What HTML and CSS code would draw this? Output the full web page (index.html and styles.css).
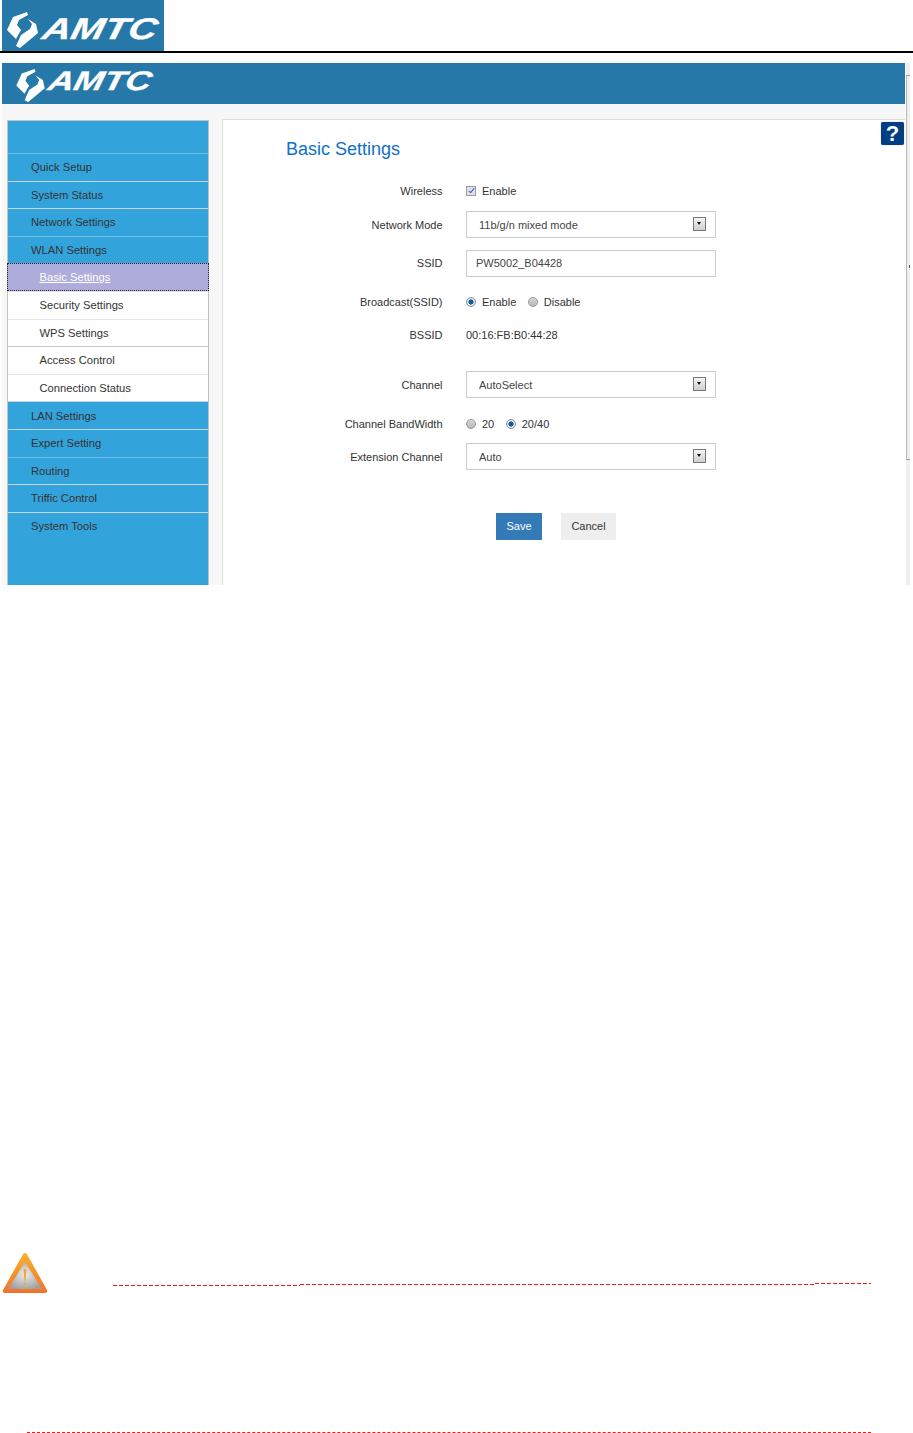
FILE: index.html
```html
<!DOCTYPE html>
<html>
  <head>
    <title>Basic Settings</title>
    <link rel="stylesheet" href="styles.css">
  </head>
  <body>
    <svg class="defs" width="0" height="0">
      <symbol id="logoMark" viewBox="0 0 31 36">
        <path d="M0 18 L6 5 L20 0 L21 3 L12 8 L10 13 L14 18 L9 27 Z" fill="#fff"/>
        <path d="M21 7 L29 12 L31 21 L13 36 L9 34 L14 23 L23 17 L25 12 Z" fill="#fff"/>
      </symbol>
    </svg>

    <header class="doc-header">
      <div class="logo-box">
        <svg class="logo-mark"><use href="#logoMark"/></svg>
        <span class="logo-text">AMTC</span>
      </div>
    </header>

    <section class="shot">
      <div class="shot-main">
        <div class="banner">
          <svg class="banner-mark"><use href="#logoMark"/></svg>
          <span class="banner-text">AMTC</span>
        </div>

        <div class="shot-body">
          <nav class="sidebar">
            <div class="side-top"></div>
            <a class="menu-item soft">Quick Setup</a>
            <a class="menu-item">System Status</a>
            <a class="menu-item">Network Settings</a>
            <a class="menu-item soft">WLAN Settings</a>
            <a class="sub-item active">Basic Settings</a>
            <a class="sub-item">Security Settings</a>
            <a class="sub-item">WPS Settings</a>
            <a class="sub-item dark">Access Control</a>
            <a class="sub-item">Connection Status</a>
            <a class="menu-item">LAN Settings</a>
            <a class="menu-item">Expert Setting</a>
            <a class="menu-item soft">Routing</a>
            <a class="menu-item">Triffic Control</a>
            <a class="menu-item">System Tools</a>
          </nav>

          <main class="panel">
            <a class="help">?</a>
            <h1 class="title">Basic Settings</h1>

            <form class="form">
              <div class="row up">
                <label class="row-label">Wireless</label>
                <div class="row-value">
                  <label class="opt"><input type="checkbox" checked>Enable</label>
                </div>
              </div>
              <div class="row">
                <label class="row-label">Network Mode</label>
                <div class="select-wrap">
                  <select class="select"><option>11b/g/n mixed mode</option></select>
                  <span class="select-btn"></span>
                </div>
              </div>
              <div class="row row-mid up">
                <label class="row-label">SSID</label>
                <input class="text-input" type="text" value="PW5002_B04428">
              </div>
              <div class="row row-mid up">
                <label class="row-label">Broadcast(SSID)</label>
                <div class="row-value">
                  <label class="opt"><input type="radio" name="ssid" checked>Enable</label>
                  <label class="opt"><input type="radio" name="ssid">Disable</label>
                </div>
              </div>
              <div class="row up">
                <label class="row-label">BSSID</label>
                <div class="row-value">00:16:FB:B0:44:28</div>
              </div>
              <div class="row row-wide">
                <label class="row-label">Channel</label>
                <div class="select-wrap">
                  <select class="select"><option>AutoSelect</option></select>
                  <span class="select-btn"></span>
                </div>
              </div>
              <div class="row row-mid">
                <label class="row-label">Channel BandWidth</label>
                <div class="row-value">
                  <label class="opt"><input type="radio" name="bw">20</label>
                  <label class="opt"><input type="radio" name="bw" checked>20/40</label>
                </div>
              </div>
              <div class="row">
                <label class="row-label">Extension Channel</label>
                <div class="select-wrap">
                  <select class="select"><option>Auto</option></select>
                  <span class="select-btn"></span>
                </div>
              </div>
              <div class="actions">
                <button class="btn btn-save" type="button">Save</button>
                <button class="btn btn-cancel" type="button">Cancel</button>
              </div>
            </form>
          </main>
        </div>
      </div>
      <div class="scrollbar">
        <div class="scroll-thumb"></div>
        <span class="scroll-mark"></span>
      </div>
    </section>

    <section class="note">
      <svg class="warn" viewBox="0 0 46 41">
        <defs>
          <linearGradient id="warnEdge" x1="0" y1="0" x2="0" y2="1">
            <stop offset="0" stop-color="#f7b32e"/>
            <stop offset="1" stop-color="#f2722a"/>
          </linearGradient>
          <radialGradient id="warnFill" cx="0.5" cy="0.45" r="0.6">
            <stop offset="0" stop-color="#ececec"/>
            <stop offset="1" stop-color="#a0a0a0"/>
          </radialGradient>
        </defs>
        <path d="M23 0 Q25 0 26 3 L45 37 Q46 40 43 40 L3 40 Q0 40 1 37 L20 3 Q21 0 23 0 Z" fill="url(#warnEdge)"/>
        <path d="M23 9 L40 36 L6 36 Z" fill="url(#warnFill)"/>
        <path d="M21.6 16 L24.4 16 L23.6 28 L22.4 28 Z M22 29.5 H24 V32 H22 Z" fill="#f0aa2c"/>
      </svg>
      <svg class="note-rule" viewBox="0 0 758 4">
        <path d="M0 2.5 H187 M187 1.5 H702 M702 0.5 H758" fill="none" stroke="#f01818" stroke-dasharray="4 2"/>
      </svg>
    </section>

    <div class="foot-rule"></div>
  </body>
</html>
```

FILE: styles.css
```css
body {
  margin: 0;
  background: white;
  font-family: "Liberation Sans", Arial, sans-serif;
  font-size: 11px;
  color: #333;
  overflow: hidden;
}

.defs {
  position: absolute;
}

/* Document header */
.doc-header {
  height: 51px;
  border-bottom: 2px solid black;
  padding-left: 2px;
}

.logo-box {
  width: 162px;
  height: 51px;
  background: #2578a8;
  display: flex;
  align-items: center;
}

.logo-mark {
  width: 31px;
  height: 36px;
  margin: 9px 0 0 5px;
  flex: none;
}

.logo-text,
.banner-text {
  color: white;
  font-weight: bold;
  font-style: italic;
  transform-origin: left bottom;
  -webkit-text-stroke: 0.3px white;
}

.logo-text {
  font-size: 30px;
  margin: 6px 0 0 1px;
  transform: scaleX(1.32) skewX(-10deg);
}

/* Screenshot of the router page */
.shot {
  display: flex;
  height: 522px;
  margin: 10px 0 0 2px;
}

.shot-main {
  width: 903px;
}

.banner {
  height: 41px;
  background: #2578a8;
  display: flex;
  align-items: center;
}

.banner-mark {
  width: 29px;
  height: 33px;
  margin: 3px 0 0 14px;
  flex: none;
}

.banner-text {
  font-size: 27px;
  margin: -4px 0 0 0;
  transform: scaleX(1.32) skewX(-10deg);
}

.shot-body {
  display: flex;
  height: 481px;
  background: #f7f7f7;
  padding-top: 15px;
  box-sizing: border-box;
}

/* Sidebar */
.sidebar {
  width: 202px;
  margin: 1px 0 0 5px;
  background: #33a3dc;
  border: 1px solid #c2c2c2;
  border-bottom: 0;
  box-sizing: border-box;
  flex: none;
}

.side-top {
  height: 32px;
}

.menu-item,
.sub-item {
  display: flex;
  align-items: center;
  height: 27.6px;
  box-sizing: border-box;
  font-size: 11.2px;
}

.menu-item {
  padding-left: 23px;
  border-top: 1px solid #c6d6de;
}

.menu-item.soft {
  border-top-color: #74bfe6;
}

.sub-item {
  padding-left: 31.5px;
  background: white;
  border-top: 1px solid #e4e4e4;
}

.sub-item.dark {
  border-top-color: #c8c8c8;
}

.sub-item.active {
  margin: 0 -1px;
  padding-left: 31.5px;
  background: #adacdb;
  color: white;
  text-decoration: underline;
  border: 1px dotted #222;
}

/* Main panel */
.panel {
  position: relative;
  flex: 1;
  margin-left: 13px;
  background: white;
  border-top: 1px solid #dedede;
  border-left: 1px solid #dedede;
}

.help {
  position: absolute;
  top: 2px;
  right: 1px;
  width: 23px;
  height: 23px;
  background: #003f82;
  border-radius: 2px;
  box-shadow: 0 0 1px #777;
  color: white;
  font-size: 22px;
  font-weight: bold;
  line-height: 23px;
  text-align: center;
}

.title {
  margin: 18px 0 0 63px;
  font-size: 18px;
  font-weight: normal;
  line-height: 22px;
  color: #1070c8;
}

.form {
  display: flex;
  flex-direction: column;
  gap: 6px;
  margin-top: 18px;
}

.row {
  display: flex;
  align-items: center;
  gap: 23.5px;
  height: 27px;
}

.row-mid {
  margin-top: 6px;
}

.row-wide {
  margin-top: 16px;
}

.row-label {
  width: 219.5px;
  text-align: right;
}

/* these rows sit a pixel higher than their boxes */
.up .row-label,
.up .row-value {
  margin-bottom: 2px;
}

.row-value {
  display: flex;
  align-items: center;
  gap: 11.5px;
}

.opt {
  display: flex;
  align-items: center;
  gap: 6px;
}

input[type="radio"],
input[type="checkbox"] {
  appearance: none;
  position: relative;
  width: 10px;
  height: 10px;
  margin: 0;
  border: 1px solid #9a9a9a;
  box-sizing: border-box;
  background: linear-gradient(#d8d8d8, #b8b8b8);
}

input[type="radio"] {
  border-radius: 50%;
}

input[type="radio"]:checked {
  background: radial-gradient(circle, #0f5e96 0 2.2px, #dfe6ea 2.9px);
  border-color: #8a9096;
}

input[type="checkbox"]:checked {
  background: #dde1ee;
}

input[type="checkbox"]:checked::after {
  content: "";
  position: absolute;
  top: 0;
  left: 2.5px;
  width: 2px;
  height: 5px;
  border-right: 1.5px solid #3c5fae;
  border-bottom: 1.5px solid #3c5fae;
  transform: rotate(40deg);
}

.select-wrap {
  position: relative;
  width: 250px;
  height: 27px;
}

.select,
.text-input {
  width: 250px;
  height: 27px;
  border: 1px solid #ccc;
  border-radius: 0;
  box-sizing: border-box;
  background: white;
  font: inherit;
  color: #444;
  outline: none;
}

.select {
  appearance: none;
  padding-left: 12px;
}

.text-input {
  padding: 0 9px 2px;
}

.select-btn {
  position: absolute;
  top: 6px;
  right: 10px;
  width: 13px;
  height: 14px;
  box-sizing: border-box;
  border: 1px solid #777;
  background: linear-gradient(#f4f4f4, #cfcfcf);
  pointer-events: none;
}

.select-btn::after {
  content: "";
  position: absolute;
  top: 4px;
  left: 3px;
  border: 2.5px solid transparent;
  border-top: 3px solid #111;
  border-bottom: 0;
}

.actions {
  display: flex;
  gap: 19px;
  margin: 37px 0 0 273px;
}

.btn {
  height: 27px;
  border: 0;
  font: inherit;
  padding: 0 0 2px;
}

.btn-save {
  width: 46px;
  background: #337ab7;
  color: white;
}

.btn-cancel {
  width: 55px;
  background: #eee;
  color: #333;
}

/* Scrollbar column */
.scrollbar {
  position: relative;
  width: 4px;
  margin-left: 1px;
  background: #efefef;
  padding-top: 12px;
  box-sizing: border-box;
}

.scroll-thumb {
  height: 383px;
  border-left: 1px solid #b9b9b9;
  border-top: 1px solid #999;
  border-bottom: 1px solid #999;
}

.scroll-mark {
  position: absolute;
  top: 202px;
  left: 3px;
  width: 1px;
  height: 3px;
  background: #555;
}

/* Warning note */
.note {
  display: flex;
  align-items: flex-end;
  gap: 65px;
  margin: 668px 0 0 2px;
}

.warn {
  width: 46px;
  height: 41px;
  flex: none;
}

.note-rule {
  width: 758px;
  height: 4px;
  margin-bottom: 7px;
}

.foot-rule {
  width: 844px;
  margin: 138px 0 0 27px;
  border-top: 1px dashed #f01818;
}
```
